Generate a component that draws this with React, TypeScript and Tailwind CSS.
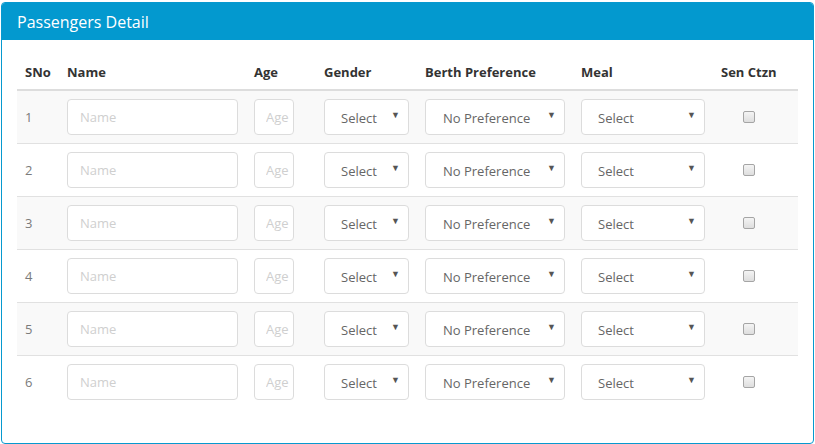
import React from "react";

const COLS = "grid-cols-[42px_187px_70px_101px_156px_140px_84px]";
const ROWS = [1, 2, 3, 4, 5, 6];

function FakeSelect({ label, className }: { label: string; className: string }) {
  return (
    <div
      className={`relative flex h-[36px] items-center rounded border border-[#dcdcdc] bg-white pt-[3px] text-[13px] text-[#666] ${className}`}
    >
      {label}
      <span className="absolute right-[8px] top-[10px] text-[9px] leading-none text-[#555]">▼</span>
    </div>
  );
}

function PassengerRow({ n }: { n: number }) {
  const striped = n % 2 === 1;
  return (
    <div
      className={`grid ${COLS} items-center ${n > 1 ? "border-t border-[#e1e1e1]" : ""} ${
        striped ? "bg-[#f9f9f9]" : "bg-white"
      }`}
    >
      <div className="pl-[8px] pt-[1px] text-[13px] text-[#7b7b7b]">{n}</div>
      <div className="px-[8px] py-[8px]">
        <input
          placeholder="Name"
          className="h-[36px] w-full rounded border border-[#dcdcdc] bg-white pl-[12px] text-[13px] placeholder:text-[#cfcfcf] outline-none"
        />
      </div>
      <div className="px-[8px] py-[8px]">
        <input
          placeholder="Age"
          className="h-[36px] w-[40px] rounded border border-[#dcdcdc] bg-white pl-[11px] pr-0 text-[13px] placeholder:text-[#cfcfcf] outline-none"
        />
      </div>
      <div className="px-[8px]">
        <FakeSelect label="Select" className="pl-[16px]" />
      </div>
      <div className="px-[8px]">
        <FakeSelect label="No Preference" className="pl-[17px]" />
      </div>
      <div className="px-[8px]">
        <FakeSelect label="Select" className="pl-[16px]" />
      </div>
      <div className="flex justify-center pr-[12px]">
        <div className="h-[12px] w-[12px] rounded-[2px] border border-[#a5a5a5] bg-gradient-to-b from-[#f4f4f4] to-[#dedede]" />
      </div>
    </div>
  );
}

export default function App() {
  return (
    <div className="h-[444px] w-[815px] bg-white pl-[1px] pt-[2px] font-['Open_Sans',sans-serif]">
      <div className="h-[442px] w-[813px] overflow-hidden rounded border border-[#0799cf] bg-white">
        <div className="h-[37px] bg-[#0399cf] px-[15px] pt-[10px] text-[16px] leading-[18px] text-white">
          Passengers Detail
        </div>
        <div className="px-[15px] pt-[15px]">
          <div className={`grid ${COLS} h-[36px] items-center border-b-2 border-[#dddddd] pt-[2px] text-[13px] font-bold text-[#333]`}>
            <div className="pl-[8px]">SNo</div>
            <div className="pl-[8px]">Name</div>
            <div className="pl-[8px]">Age</div>
            <div className="pl-[8px]">Gender</div>
            <div className="pl-[8px]">Berth Preference</div>
            <div className="pl-[8px]">Meal</div>
            <div className="pl-[8px]">Sen Ctzn</div>
          </div>
          {ROWS.map((n) => (
            <PassengerRow key={n} n={n} />
          ))}
        </div>
      </div>
    </div>
  );
}
